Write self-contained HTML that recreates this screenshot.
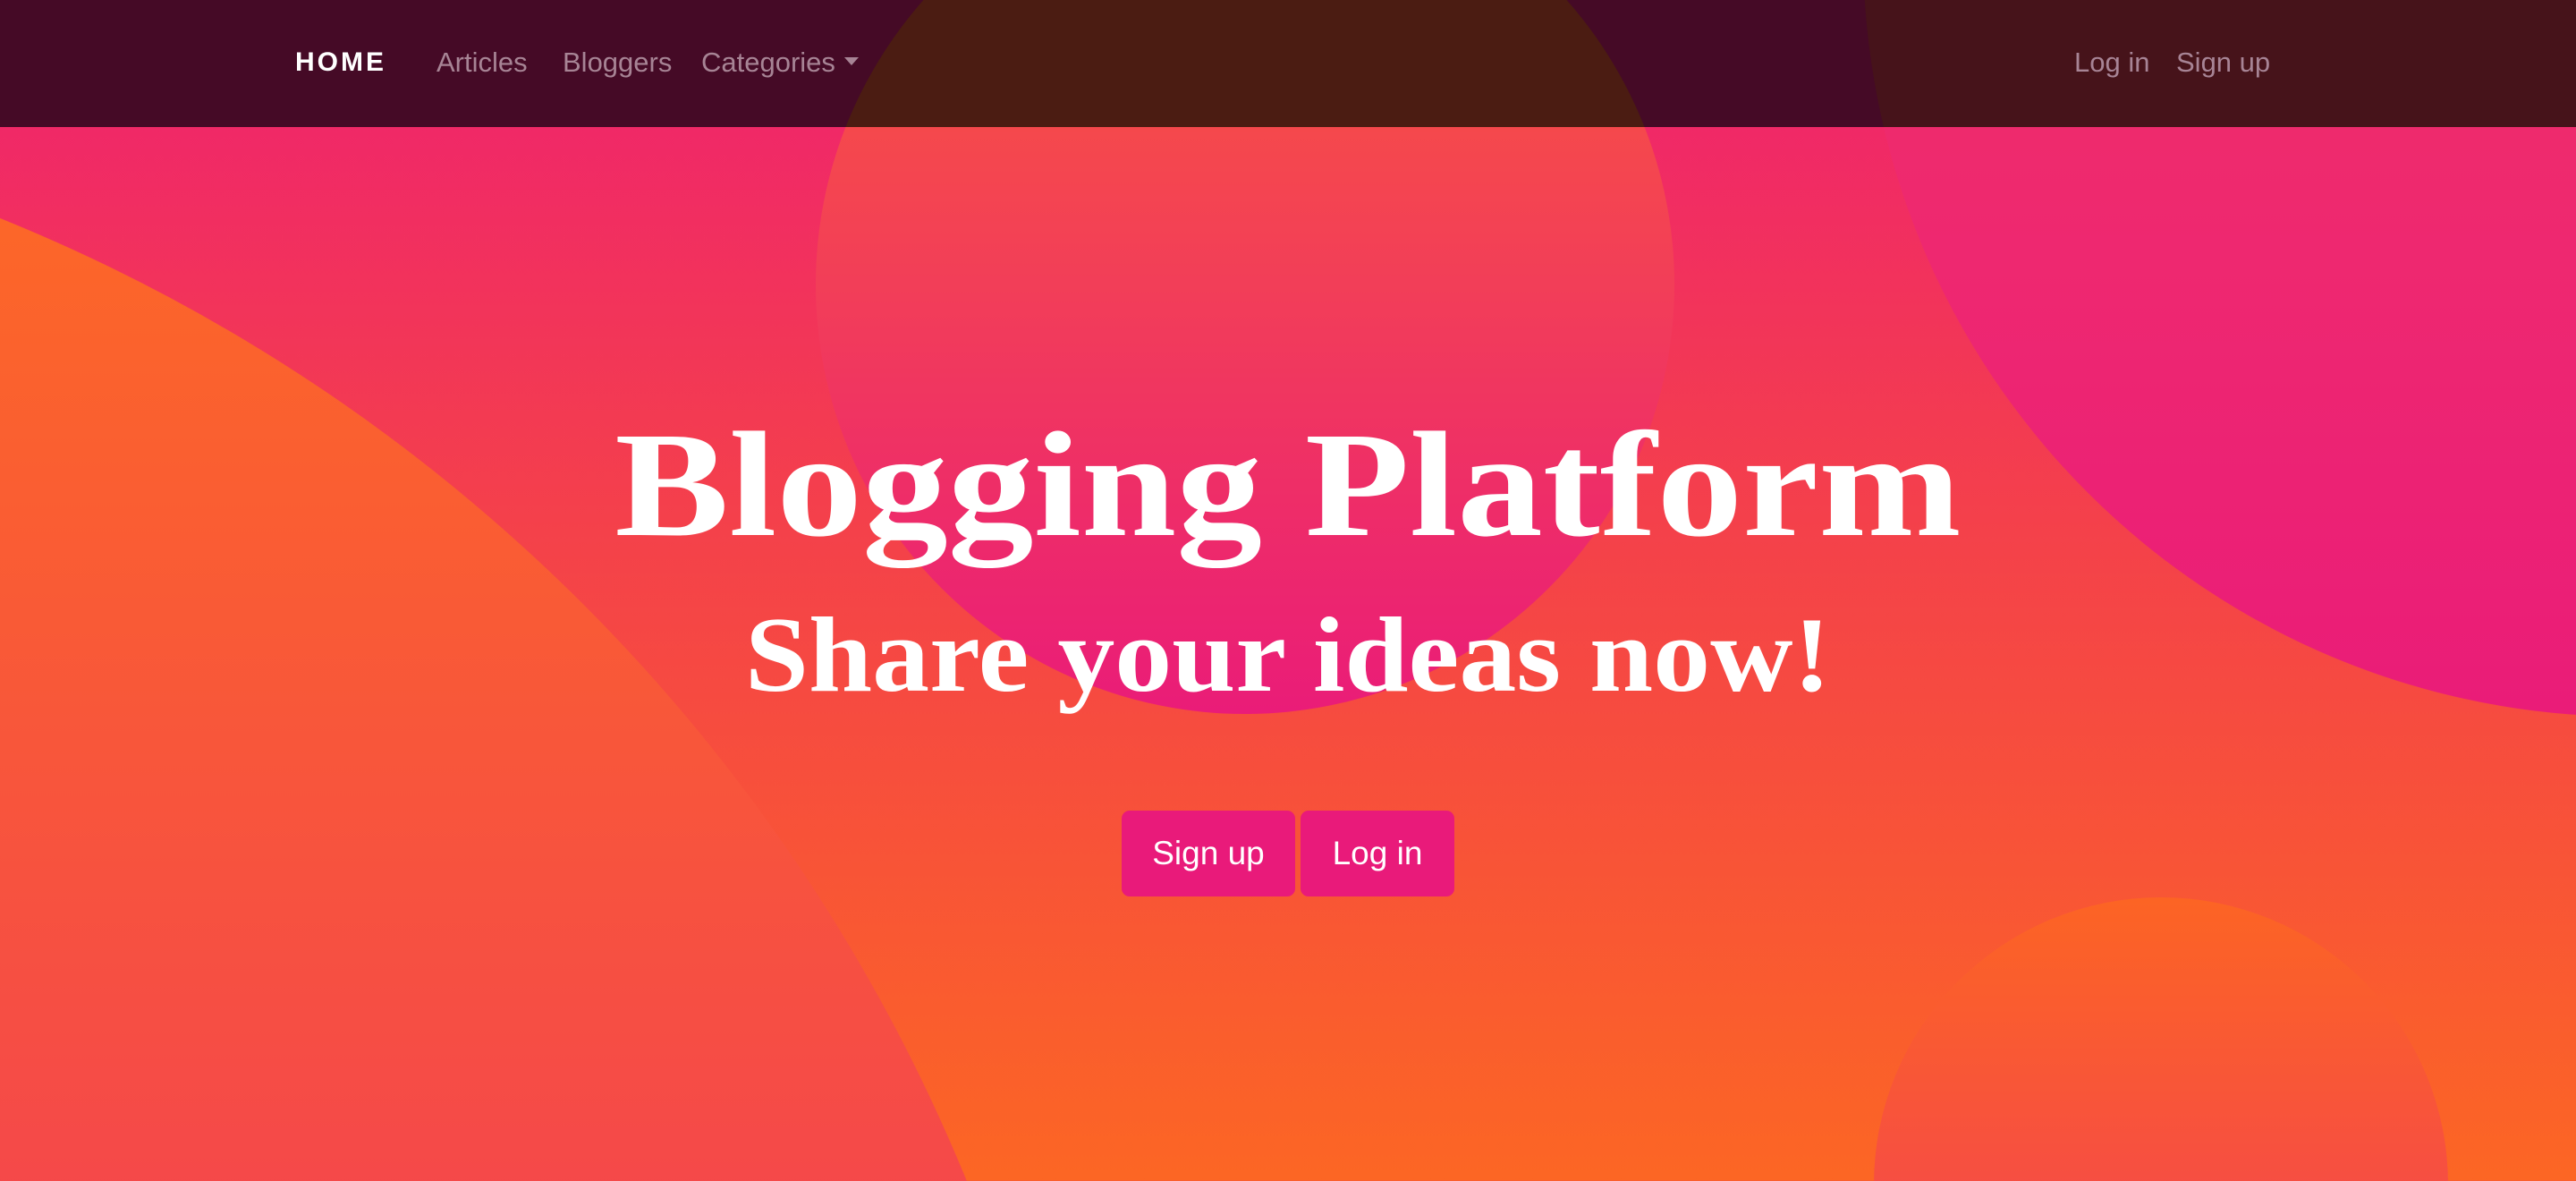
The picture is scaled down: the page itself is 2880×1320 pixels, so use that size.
<!DOCTYPE html>
<html><head><meta charset="utf-8">
<style>
*{margin:0;padding:0;box-sizing:border-box}
html,body{width:2880px;height:1320px;overflow:hidden}
body{position:relative;background:linear-gradient(180deg,#ef2170 0%,#f4414a 45%,#fc6624 100%);font-family:"Liberation Sans",sans-serif}
.c{position:absolute;border-radius:50%}
#c1{left:-2697px;top:101px;width:3924px;height:3924px;background:linear-gradient(180deg,#fd6a24 0%,#f54a48 30%,#ee2a62 55%)}
#c2{left:912px;top:-162px;width:960px;height:960px;background:linear-gradient(180deg,#fa5a38 0%,#f23e58 50%,#ea1c78 100%)}
#c3{left:2083px;top:-911px;width:1712px;height:1712px;background:linear-gradient(180deg,#f03a55 0%,#ee2870 70%,#ea1c78 100%)}
#c4{left:2095px;top:1003px;width:642px;height:642px;background:linear-gradient(180deg,#fc6424 0%,#f54a48 60%)}
nav{position:absolute;left:0;top:0;width:2880px;height:142px;background:#450a26;overflow:hidden}
nav .nc{position:absolute;border-radius:50%}
nav a{position:absolute;top:50px;font-size:31px;color:#a78495;text-decoration:none;line-height:40px}
nav .home{color:#fff;font-weight:bold;letter-spacing:3px;font-size:30px}
.caret{display:inline-block;width:0;height:0;border-left:8px solid transparent;border-right:8px solid transparent;border-top:9px solid #a78495;vertical-align:middle;margin-left:10px;margin-top:-6px}
h1,h2{position:absolute;left:0;width:2880px;text-align:center;color:#fff;font-family:"Liberation Serif",serif;font-weight:bold;white-space:nowrap}
h1{top:458px;font-size:168px;line-height:168px;transform:scaleX(1.14)}
h2{top:672px;font-size:120px;line-height:120px;transform:scaleX(1.066)}
.btn{position:absolute;top:906px;height:96px;background:#e91a7a;border-radius:9px;color:#fff;font-size:37px;line-height:96px;text-align:center}
</style></head><body>
<div class="c" id="c1"></div>
<div class="c" id="c4"></div>
<div class="c" id="c3"></div>
<div class="c" id="c2"></div>
<nav>
<div class="nc" style="left:2083px;top:-911px;width:1712px;height:1712px;background:#46131a"></div>
<div class="nc" style="left:912px;top:-162px;width:960px;height:960px;background:#4b1c12"></div>
<a class="home" style="left:330px">HOME</a>
<a style="left:488px">Articles</a>
<a style="left:629px">Bloggers</a>
<a style="left:784px">Categories<span class="caret"></span></a>
<a style="left:2319px">Log in</a>
<a style="left:2433px">Sign up</a>
</nav>
<h1>Blogging Platform</h1>
<h2>Share your ideas now!</h2>
<div class="btn" style="left:1254px;width:194px">Sign up</div>
<div class="btn" style="left:1454px;width:172px">Log in</div>
</body></html>
